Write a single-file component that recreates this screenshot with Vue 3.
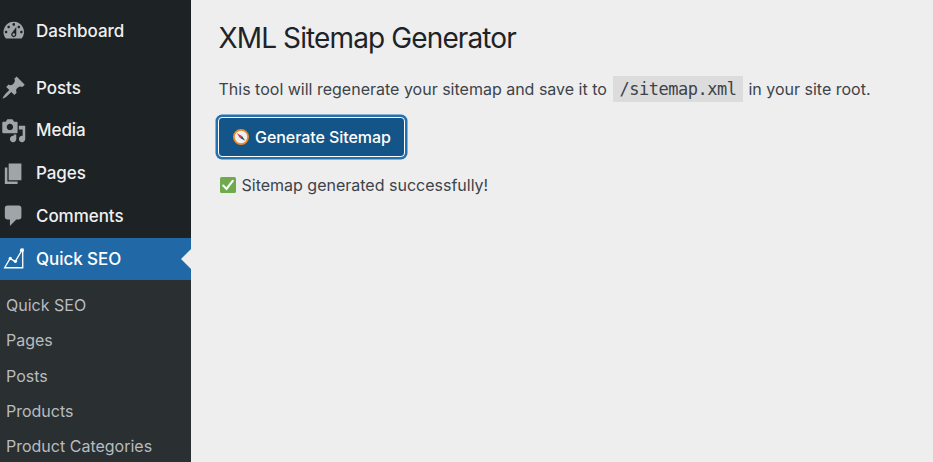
<script setup>
const menu = [
  { label: 'Dashboard', cls: 'first', d: 'M3.76 16h12.48A7.998 7.998 0 0 0 10 3a7.998 7.998 0 0 0-6.24 13zM10 4c.55 0 1 .45 1 1s-.45 1-1 1-1-.45-1-1 .45-1 1-1zM6 6c.55 0 1 .45 1 1s-.45 1-1 1-1-.45-1-1 .45-1 1-1zm8 0c.55 0 1 .45 1 1s-.45 1-1 1-1-.45-1-1 .45-1 1-1zm-5.37 5.55L12 7v6c0 1.1-.9 2-2 2s-2-.9-2-2c0-.57.24-1.08.63-1.45zM4 10c.55 0 1 .45 1 1s-.45 1-1 1-1-.45-1-1 .45-1 1-1zm12 0c.55 0 1 .45 1 1s-.45 1-1 1-1-.45-1-1 .45-1 1-1zm-5 3c0-.55-.45-1-1-1s-1 .45-1 1 .45 1 1 1 1-.45 1-1z' },
  { label: 'Posts', d: 'M10.44 3.02l1.82-1.82 6.36 6.35-1.83 1.82c-1.05-.68-2.48-.57-3.41.36l-.75.75c-.92.93-1.04 2.35-.35 3.41l-1.83 1.82-2.41-2.41-2.8 2.79c-.42.42-3.38 2.71-3.8 2.29s1.86-3.39 2.28-3.81l2.79-2.79L4.1 9.36l1.83-1.82c1.05.69 2.48.57 3.4-.36l.75-.75c.93-.92 1.05-2.35.36-3.41z' },
  { label: 'Media', d: 'M13 11V4c0-.55-.45-1-1-1h-1.67L9 1H5L3.67 3H2c-.55 0-1 .45-1 1v7c0 .55.45 1 1 1h10c.55 0 1-.45 1-1zM7 4.5c1.38 0 2.5 1.12 2.5 2.5S8.38 9.5 7 9.5 4.5 8.38 4.5 7 5.62 4.5 7 4.5zM14 6h5v10.5c0 1.38-1.12 2.5-2.5 2.5S14 17.88 14 16.5s1.12-2.5 2.5-2.5c.17 0 .34.02.5.05V9h-3V6zm-4 8.05V13h2v3.5c0 1.38-1.12 2.5-2.5 2.5S7 17.88 7 16.5 8.12 14 9.5 14c.17 0 .34.02.5.05z' },
  { label: 'Pages', d: 'M6 15V2h10v13H6zm-1 1h8v2H3V5h2v11z' },
  { label: 'Comments', d: 'M5 2h9c1.1 0 2 .9 2 2v7c0 1.1-.9 2-2 2h-2l-5 5v-5H5c-1.1 0-2-.9-2-2V4c0-1.1.9-2 2-2z' },
]
const submenu = ['Quick SEO', 'Pages', 'Posts', 'Products', 'Product Categories']
</script>

<template>
  <div class="admin">
    <nav class="sidebar">
      <a v-for="m in menu" :key="m.label" class="item" :class="m.cls">
        <svg class="icon" viewBox="0 0 20 20"><path :d="m.d" fill-rule="evenodd" /></svg>
        <span>{{ m.label }}</span>
      </a>
      <a class="item current">
        <svg class="icon chart" viewBox="0 0 25 25">
          <path d="M3.6 21.3 8.9 12.2 14 15.2 20.3 4.5 21.3 3.5V21.3Z" />
          <circle cx="9.1" cy="12.2" r="1.6" /><circle cx="14.1" cy="15" r="1.6" /><circle cx="20.5" cy="4.1" r="1.9" />
        </svg>
        <span>Quick SEO</span>
      </a>
      <div class="submenu"><a v-for="s in submenu" :key="s">{{ s }}</a></div>
    </nav>
    <main class="content">
      <h1>XML Sitemap Generator</h1>
      <p class="intro"><span class="lead">This tool will regenerate your sitemap and save it to</span><code>/sitemap.xml</code><span class="tail">in your site root.</span></p>
      <button class="generate">
        <svg class="emoji" viewBox="0 0 16 16">
          <circle cx="8" cy="8" r="7.1" fill="#eef2f5" stroke="#f08a24" stroke-width="1.8" />
          <path d="M3.8 4.2 9 7 7 9Z" fill="#dd2e44" />
          <path d="M12.2 11.8 9 7 7 9Z" fill="#3b4a56" />
        </svg>
        <span>Generate Sitemap</span>
      </button>
      <p class="status">
        <svg class="emoji" viewBox="0 0 16 16">
          <rect width="16" height="16" rx="1.6" fill="#6fab4d" />
          <path d="M3.2 8.6 6.5 12 12.7 3.8" fill="none" stroke="#fff" stroke-width="2.1" stroke-linecap="round" />
        </svg>
        <span>Sitemap generated successfully!</span>
      </p>
    </main>
  </div>
</template>

<style>
body { margin: 0; background: #eee; overflow: hidden; }
</style>
<style scoped>
.admin { display: flex; height: 462px; overflow: hidden; background: #eee; font-family: Inter, sans-serif; color: #3c434a; }
.sidebar { width: 191px; flex: none; box-sizing: border-box; padding-top: 9.5px; background: #1d2224; display: flex; flex-direction: column; }
.item { display: flex; align-items: center; height: 42.8px; flex: none; box-sizing: border-box; padding-left: 0.6px; gap: 9.9px; color: #f0f0f1; font-size: 17px; font-weight: 500; letter-spacing: -0.05px; white-space: nowrap; }
.first { margin-bottom: 14px; }
.icon { width: 25.5px; height: 25.5px; fill: #a0a5aa; flex: none; }
.current { position: relative; height: 42px; margin-top: 0.2px; background: #2069a6; color: #fff; }
.current::after { content: ''; position: absolute; right: 0; top: 11px; border: solid transparent; border-width: 10px 10px 10px 0; border-right-color: #eee; }
.chart { fill: #fff; }
.chart path { fill: none; stroke: #fff; stroke-width: 1.3; }
.submenu { flex: 1; background: #2a2f32; padding: 7.7px 0 0 6px; }
.submenu a { display: flex; align-items: center; height: 35.3px; font-size: 16px; color: #b8bcbf; white-space: nowrap; }
.content { flex: 1; padding: 20px 0 0 27.5px; display: flex; flex-direction: column; align-items: flex-start; }
h1 { margin: 0; font-size: 28px; line-height: 36px; font-weight: 400; color: #1d2327; letter-spacing: -0.88px; white-space: nowrap; }
.intro { display: flex; align-items: center; margin: 20px 0 0; height: 26px; font-size: 16px; white-space: nowrap; }
code { box-sizing: border-box; width: 130px; font: 17px "DejaVu Sans Mono", monospace; letter-spacing: -0.48px; line-height: 27px; height: 26px; background: #dcdcdc; padding: 0 0 0 6px; margin: 0 5px 0 6.5px; }
.generate { box-sizing: border-box; font: 500 16px Inter, sans-serif; letter-spacing: -0.06px; margin: 15px 0 0 -0.5px; width: 187px; height: 40px; display: flex; align-items: center; gap: 6px; padding: 0 0 0 14px; color: #fff; background: #135588; border: 1px solid #fff; border-radius: 4px; box-shadow: 0 0 0 2.5px #2271b1; white-space: nowrap; }
.emoji { width: 16px; height: 16px; flex: none; }
.status { display: flex; align-items: center; gap: 5.5px; height: 24px; margin: 16px 0 0 1.5px; font-size: 16px; white-space: nowrap; }
</style>
